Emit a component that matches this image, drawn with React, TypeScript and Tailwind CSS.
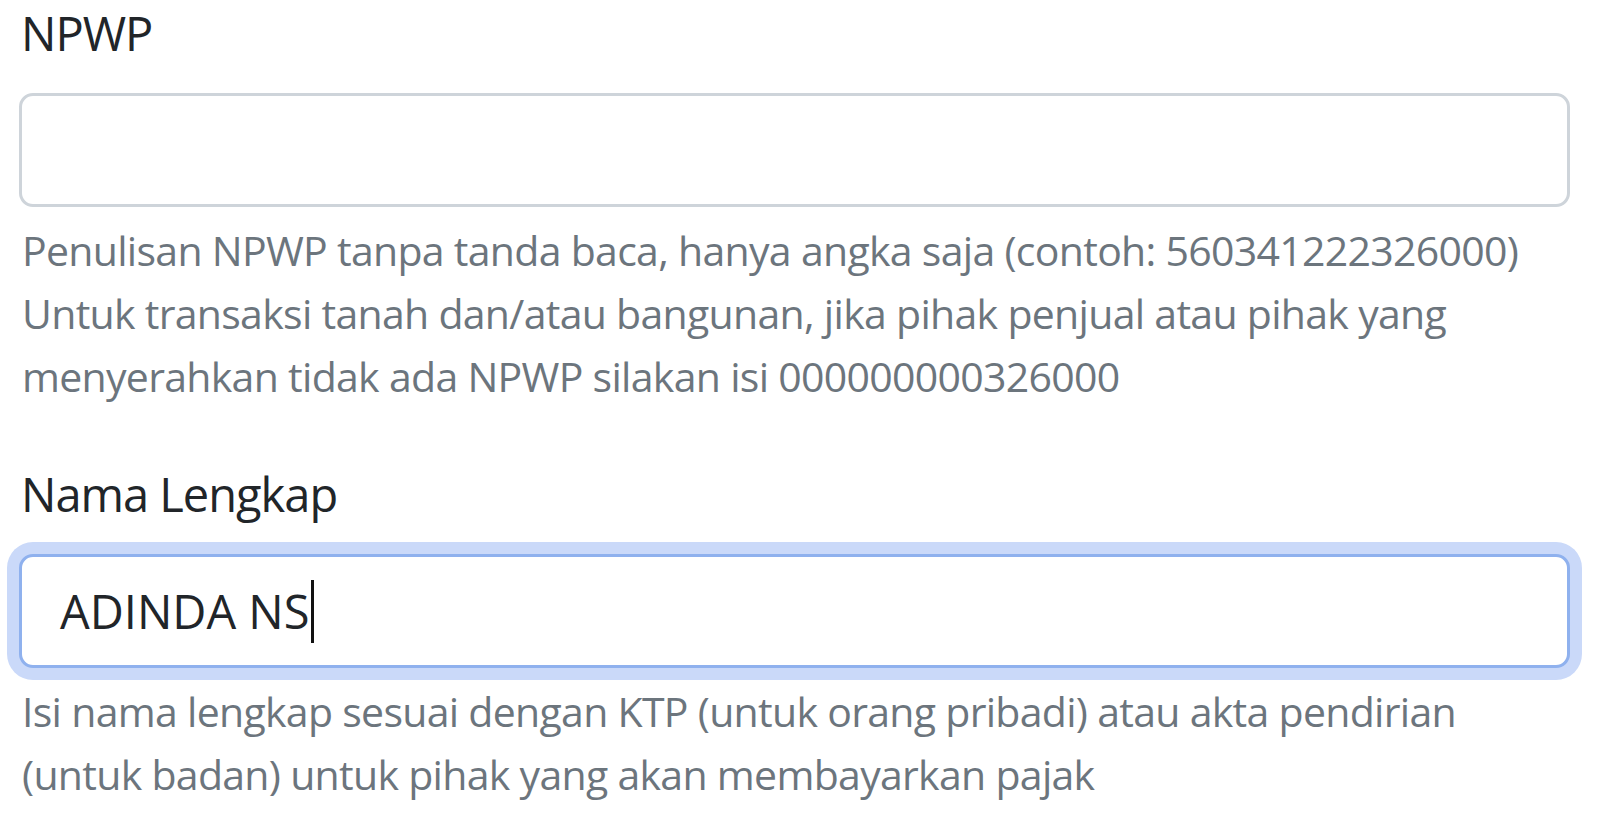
import React from "react";

export default function App() {
  return (
    <div
      className="w-[1602px] h-[822px] overflow-hidden bg-white text-[#212529]"
      style={{ fontFamily: '"Open Sans", "Noto Sans", sans-serif' }}
    >
      <div className="w-[1570px] pl-[19px] pt-0">
        {/* NPWP */}
        <div className="mb-[50px]">
          <label className="block mt-[-3px] mb-[24px] pl-[2px] text-[47px] leading-[72px] tracking-[-1px]">NPWP</label>
          <div className="h-[114px] w-full rounded-[14px] border-[3px] border-[#ced4da] bg-white"></div>
          <div className="mt-[12px] pl-[3px] text-[41px] leading-[63px] tracking-[-0.7px] text-[#6c757d] whitespace-nowrap">
            Penulisan NPWP tanpa tanda baca, hanya angka saja (contoh: 560341222326000)
            <br />
            Untuk transaksi tanah dan/atau bangunan, jika pihak penjual atau pihak yang
            <br />
            menyerahkan tidak ada NPWP silakan isi 000000000326000
          </div>
        </div>

        {/* Nama Lengkap */}
        <div>
          <label className="block mb-[24px] pl-[2px] text-[47px] leading-[72px] tracking-[-1px]">Nama Lengkap</label>
          <div className="flex h-[114px] w-full items-center rounded-[14px] border-[3px] border-[#8fb1ee] bg-white pl-[38px] shadow-[0_0_0_12px_#cad9f9]">
            <span className="text-[47px] leading-[72px] tracking-[0px] text-[#212529]">ADINDA NS</span>
            <span className="ml-[1px] inline-block h-[63px] w-[3px] bg-[#111]"></span>
          </div>
          <div className="mt-[12px] pl-[3px] text-[41px] leading-[63px] tracking-[-0.7px] text-[#6c757d] whitespace-nowrap">
            Isi nama lengkap sesuai dengan KTP (untuk orang pribadi) atau akta pendirian
            <br />
            (untuk badan) untuk pihak yang akan membayarkan pajak
          </div>
        </div>
      </div>
    </div>
  );
}
